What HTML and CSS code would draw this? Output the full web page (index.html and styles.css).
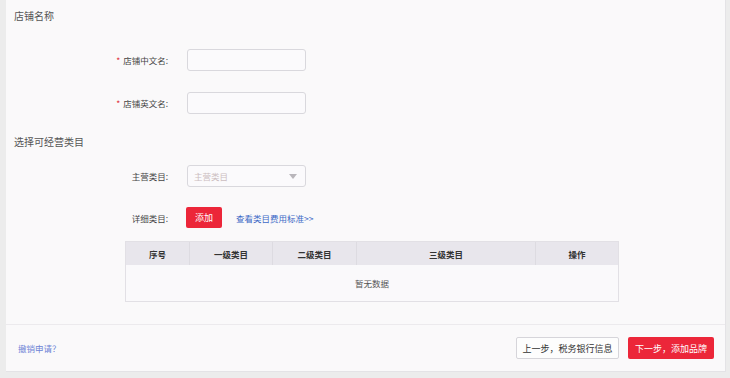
FILE: index.html
```html
<!DOCTYPE html>
<html lang="zh">
<head>
<meta charset="utf-8">
<link rel="stylesheet" href="styles.css">
</head>
<body>
<div class="card">
  <div class="main">
    <div class="section-title">店铺名称</div>
    <div class="form-row r1">
      <label class="lbl"><span class="star">*</span>店铺中文名:</label>
      <div class="input"></div>
    </div>
    <div class="form-row r2">
      <label class="lbl"><span class="star">*</span>店铺英文名:</label>
      <div class="input"></div>
    </div>
    <div class="section-title s2">选择可经营类目</div>
    <div class="form-row r3">
      <label class="lbl">主营类目:</label>
      <div class="input select"><span class="ph">主营类目</span><span class="caret"></span></div>
    </div>
    <div class="form-row r4">
      <label class="lbl">详细类目:</label>
      <div class="btn-add">添加</div>
      <a class="link">查看类目费用标准&gt;&gt;</a>
    </div>
    <div class="table">
      <div class="thead">
        <div class="c c1">序号</div>
        <div class="c c2">一级类目</div>
        <div class="c c3">二级类目</div>
        <div class="c c4">三级类目</div>
        <div class="c c5">操作</div>
      </div>
      <div class="tbody">暂无数据</div>
    </div>
  </div>
  <div class="footer">
    <a class="cancel">撤销申请？</a>
    <div class="btns">
      <div class="btn btn-prev">上一步，税务银行信息</div>
      <div class="btn btn-next">下一步，添加品牌</div>
    </div>
  </div>
</div>
</body>
</html>
```
FILE: styles.css
```css
* { box-sizing: border-box; }
html, body { margin: 0; padding: 0; }
body {
  width: 730px;
  height: 378px;
  background: #ececec;
  font-family: "Noto Sans CJK SC", "Liberation Sans", sans-serif;
  overflow: hidden;
}
.card {
  margin-left: 6px;
  width: 720px;
  height: 372px;
  background: #faf9fa;
  border-right: 1px solid #e4e3e6;
  border-bottom: 1px solid #e4e3e6;
  display: flex;
  flex-direction: column;
}
.main {
  height: 325px;
  border-bottom: 1px solid #eceaed;
  padding: 8px 0 0 8px;
}
.section-title {
  font-size: 10px;
  color: #555;
  line-height: 16px;
}
.s2 { margin-top: 20px; }
.form-row {
  display: flex;
  align-items: center;
}
.r1 { margin-top: 25px; }
.r2 { margin-top: 21px; }
.r3 { margin-top: 15px; }
.r4 { margin-top: 20px; }
.lbl {
  width: 161px;
  text-align: right;
  font-size: 8.5px;
  color: #444;
  padding-right: 7px;
}
.star { color: #e0303d; margin-right: 3px; }
.input {
  margin-left: 12px;
  width: 119px;
  height: 22px;
  border: 1px solid #d9d8dd;
  border-radius: 3px;
  background: #fbfafc;
}
.select {
  display: flex;
  align-items: center;
  justify-content: space-between;
  padding: 0 8px 0 6px;
}
.ph { font-size: 8.5px; color: #cbbdc0; }
.caret {
  width: 0; height: 0;
  border-left: 4px solid transparent;
  border-right: 4px solid transparent;
  border-top: 5px solid #b9b6bb;
}
.btn-add {
  margin-left: 11px;
  width: 36px;
  height: 21px;
  background: #ec2639;
  color: #fff;
  font-size: 9px;
  border-radius: 2px;
  display: flex;
  align-items: center;
  justify-content: center;
}
.link {
  margin-left: 14px;
  font-size: 8.5px;
  color: #3d69c6;
}
.table {
  margin: 13px 0 0 111px;
  width: 494px;
  border: 1px solid #e2e0e5;
}
.thead {
  display: flex;
  height: 23px;
  background: #e8e6ec;
}
.c {
  display: flex;
  align-items: center;
  justify-content: center;
  font-size: 8.5px;
  font-weight: bold;
  color: #333;
  border-right: 1px solid #dddbe1;
}
.c1 { width: 64px; }
.c2 { width: 83px; }
.c3 { width: 84px; }
.c4 { width: 179px; }
.c5 { flex: 1; border-right: none; }
.tbody {
  height: 36px;
  display: flex;
  align-items: center;
  justify-content: center;
  font-size: 8.5px;
  color: #555;
  background: #faf9fb;
}
.footer {
  flex: 1;
  display: flex;
  align-items: center;
  justify-content: space-between;
  padding: 0 11px 0 12px;
}
.cancel { font-size: 8.5px; color: #6f84d6; }
.btns { display: flex; gap: 9px; }
.btn {
  height: 22px;
  display: flex;
  align-items: center;
  justify-content: center;
  font-size: 9px;
  border-radius: 2px;
}
.btn-prev {
  width: 103px;
  border: 1px solid #d6d5da;
  background: #fdfdfd;
  color: #333;
}
.btn-next {
  width: 86px;
  background: #ec2639;
  color: #fff;
}
```
